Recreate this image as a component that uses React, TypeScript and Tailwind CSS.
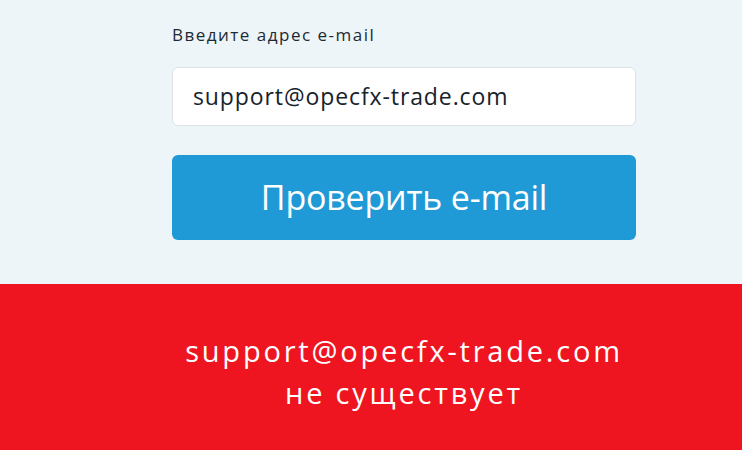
export default function App() {
  const email = 'support@opecfx-trade.com';

  return (
    <div className="w-[742px] h-[450px] overflow-hidden bg-[#eef5f9] font-['Open_Sans','Noto_Sans',sans-serif]">
      {/* Form */}
      <div className="h-[284px] pl-[172px] pt-[23px]">
        <div className="w-[464px]">
          <label className="block text-[17px] leading-[24px] tracking-[1.5px] text-[#1d2a33]">
            Введите адрес e-mail
          </label>
          <div className="mt-[20px] h-[59px] rounded-[6px] border border-[#dde2e6] bg-white pl-[20px] flex items-center">
            <span className="text-[23px] tracking-[0.9px] text-[#17232c]">{email}</span>
          </div>
          <button className="mt-[29px] h-[85px] w-full rounded-[6px] bg-[#1f9ad6] text-white text-[34px] tracking-[-0.2px] flex items-center justify-center">
            Проверить e-mail
          </button>
        </div>
      </div>

      {/* Result */}
      <div className="h-[166px] bg-[#ef1520] pl-[172px] pt-[46px]">
        <div className="w-[464px] text-center text-white text-[29px] leading-[42px] tracking-[2.8px]">
          <div>{email}</div>
          <div>не существует</div>
        </div>
      </div>
    </div>
  );
}
